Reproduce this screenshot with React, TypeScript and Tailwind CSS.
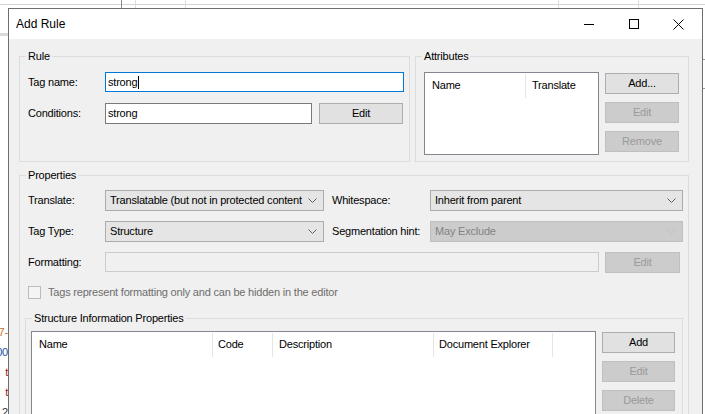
import React from "react";

const sans = "font-['Liberation_Sans',Arial,sans-serif]";

function Chevron({ disabled }: { disabled?: boolean }) {
  return (
    <svg width="9" height="5" viewBox="0 0 9 5" className="shrink-0">
      <polyline
        points="0.5,0.5 4.5,4.5 8.5,0.5"
        fill="none"
        stroke={disabled ? "#bfbfbf" : "#606060"}
        strokeWidth="1"
      />
    </svg>
  );
}

function GroupBox({ title, className, children }: { title: string; className: string; children?: React.ReactNode }) {
  return (
    <div className={`relative border border-[#dcdcdc] ${className}`}>
      <span className="absolute -top-[7px] left-[6px] bg-[#f0f0f0] px-[2px] leading-[13px]">{title}</span>
      {children}
    </div>
  );
}

function Btn({ label, className, disabled }: { label: string; className: string; disabled?: boolean }) {
  return (
    <div
      className={`flex h-[21px] items-center justify-center border ${
        disabled ? "border-[#bfbfbf] bg-[#cccccc] text-[#9a9a9a]" : "border-[#adadad] bg-[#e1e1e1]"
      } ${className}`}
    >
      {label}
    </div>
  );
}

function Combo({ value, className, disabled }: { value: string; className: string; disabled?: boolean }) {
  return (
    <div
      className={`flex h-[21px] items-center gap-[4px] border pl-[4px] pr-[6px] ${
        disabled ? "border-[#bfbfbf] bg-[#cccccc] text-[#838383]" : "border-[#acacac] bg-[#e5e5e5]"
      } ${className}`}
    >
      <span className="min-w-0 flex-1 overflow-hidden whitespace-nowrap">{value}</span>
      <Chevron disabled={disabled} />
    </div>
  );
}

// window sitting behind the dialog
function Backdrop() {
  const lines = [
    { t: "7-", c: "text-[#c8702a]" },
    { t: "00", c: "text-[#2050a0]" },
    { t: "t", c: "text-[#a31515]" },
    { t: "t", c: "text-[#a31515]" },
    { t: "2", c: "text-[#333333]" },
  ];
  return (
    <div className="absolute inset-0">
      <div className="absolute left-0 right-0 top-[4px] h-px bg-[#d4d4d4]" />
      <div className="absolute left-[121px] top-0 h-[8px] w-px bg-[#8a8a8a]" />
      <div className="absolute left-[135px] top-0 h-[8px] w-px bg-[#dcdcdc]" />
      <div className="absolute left-[185px] top-0 h-[8px] w-px bg-[#dcdcdc]" />
      <div className="absolute left-[558px] top-0 h-[8px] w-px bg-[#dcdcdc]" />
      <div className="absolute left-[638px] top-0 h-[8px] w-px bg-[#dcdcdc]" />
      <div className="absolute left-0 top-[33px] h-[3px] w-[8px] bg-[#dadada]" />
      <div className="absolute right-0 top-[59px] h-px w-[3px] bg-[#9a9a9a]" />
      <div className="absolute right-0 top-[88px] h-px w-[3px] bg-[#9a9a9a]" />
      <div className="absolute left-0 top-[322px] flex w-[8px] flex-col">
        {lines.map((l, i) => (
          <div key={i} className={`flex h-[20px] items-center justify-end overflow-hidden whitespace-nowrap ${l.c}`}>
            {l.t}
          </div>
        ))}
      </div>
    </div>
  );
}

export default function App() {
  return (
    <div className={`relative h-[414px] w-[705px] overflow-hidden bg-white text-[11px] tracking-[-0.2px] text-black ${sans}`}>
      <Backdrop />
      <div className="relative pl-[8px] pt-[8px]">
        <div className="flex h-[420px] w-[695px] flex-col border border-[#6e6e6e] bg-[#f0f0f0]">
          {/* title bar */}
          <div className="flex h-[30px] shrink-0 items-center bg-white">
            <span className="pl-[7px] text-[12px] tracking-normal">Add Rule</span>
            <div className="ml-auto mr-[1px] flex h-full">
              <div className="flex w-[45px] items-center justify-center">
                <svg width="10" height="10" viewBox="0 0 10 10">
                  <line x1="0" y1="5.5" x2="10" y2="5.5" stroke="#000" strokeWidth="1" />
                </svg>
              </div>
              <div className="flex w-[45px] items-center justify-center">
                <svg width="10" height="10" viewBox="0 0 10 10">
                  <rect x="0.5" y="0.5" width="9" height="9" fill="none" stroke="#000" strokeWidth="1" />
                </svg>
              </div>
              <div className="flex w-[45px] items-center justify-center">
                <svg width="11" height="11" viewBox="0 0 11 11">
                  <path d="M0.5 0.5 L10.5 10.5 M10.5 0.5 L0.5 10.5" stroke="#000" strokeWidth="1" />
                </svg>
              </div>
            </div>
          </div>

          <div className="px-[10px] pt-[17px]">
            <div className="flex gap-[5px]">
              {/* Rule */}
              <GroupBox title="Rule" className="h-[106px] w-[391px] pl-[8px] pt-[15px]">
                <div className="flex h-[20px] items-center">
                  <span className="w-[77px]">Tag name:</span>
                  <div className="flex h-[20px] w-[299px] items-center border border-[#0078d7] bg-white pl-[2px]">
                    strong
                    <span className="ml-[1px] h-[13px] w-px bg-black" />
                  </div>
                </div>
                <div className="mt-[11px] flex h-[21px] items-center">
                  <span className="w-[77px]">Conditions:</span>
                  <div className="flex h-[21px] w-[207px] items-center border border-[#7a7a7a] bg-white pl-[2px]">
                    strong
                  </div>
                  <Btn label="Edit" className="ml-[7px] w-[84px]" />
                </div>
              </GroupBox>

              {/* Attributes */}
              <GroupBox title="Attributes" className="flex h-[106px] w-[274px] gap-[6px] pl-[8px] pt-[15px]">
                <div className="h-[83px] w-[175px] border border-[#828790] bg-white">
                  <div className="flex h-[25px]">
                    <div className="flex w-[100px] items-center pl-[7px]">Name</div>
                    <div className="mt-[1px] h-[24px] w-px bg-[#e5e5e5]" />
                    <div className="flex items-center pl-[6px]">Translate</div>
                  </div>
                </div>
                <div className="mt-[1px] flex flex-col gap-[8px]">
                  <Btn label="Add..." className="w-[74px]" />
                  <Btn label="Edit" className="w-[74px]" disabled />
                  <Btn label="Remove" className="w-[74px]" disabled />
                </div>
              </GroupBox>
            </div>

            {/* Properties */}
            <GroupBox title="Properties" className="mt-[13px] h-[260px] w-[670px] pl-[8px] pt-[14px]">
              <div className="flex h-[21px] items-center">
                <span className="w-[77px]">Translate:</span>
                <Combo value="Translatable (but not in protected content" className="w-[219px]" />
                <span className="ml-[8px] w-[98px]">Whitespace:</span>
                <Combo value="Inherit from parent" className="w-[253px]" />
              </div>
              <div className="mt-[10px] flex h-[21px] items-center">
                <span className="w-[77px]">Tag Type:</span>
                <Combo value="Structure" className="w-[219px]" />
                <span className="ml-[8px] w-[98px]">Segmentation hint:</span>
                <Combo value="May Exclude" className="w-[253px]" disabled />
              </div>
              <div className="mt-[10px] flex h-[21px] items-center">
                <span className="w-[77px]">Formatting:</span>
                <div className="h-[20px] w-[494px] self-start border border-[#cccccc] bg-[#f0f0f0]" />
                <Btn label="Edit" className="ml-[6px] w-[75px]" disabled />
              </div>
              <div className="mt-[13px] flex h-[13px] items-center">
                <div className="h-[13px] w-[13px] border border-[#bcbcbc] bg-[#f4f4f4]" />
                <span className="ml-[7px] text-[#6d6d6d]">Tags represent formatting only and can be hidden in the editor</span>
              </div>

              {/* Structure Information Properties */}
              <GroupBox
                title="Structure Information Properties"
                className="-ml-[3px] mt-[19px] flex h-[120px] w-[658px] gap-[6px] pl-[5px] pt-[12px]"
              >
                <div className="h-[100px] w-[565px] border border-[#828790] bg-white">
                  <div className="flex h-[25px]">
                    <div className="flex w-[180px] items-center pl-[7px]">Name</div>
                    <div className="mt-[1px] h-[24px] w-px bg-[#e5e5e5]" />
                    <div className="flex w-[59px] items-center pl-[5px]">Code</div>
                    <div className="mt-[1px] h-[24px] w-px bg-[#e5e5e5]" />
                    <div className="flex w-[160px] items-center pl-[6px]">Description</div>
                    <div className="mt-[1px] h-[24px] w-px bg-[#e5e5e5]" />
                    <div className="flex w-[118px] items-center pl-[5px]">Document Explorer</div>
                    <div className="mt-[1px] h-[24px] w-px bg-[#e5e5e5]" />
                  </div>
                </div>
                <div className="mt-[1px] flex flex-col gap-[8px]">
                  <Btn label="Add" className="w-[73px]" />
                  <Btn label="Edit" className="w-[73px]" disabled />
                  <Btn label="Delete" className="w-[73px]" disabled />
                </div>
              </GroupBox>
            </GroupBox>
          </div>
        </div>
      </div>
    </div>
  );
}
